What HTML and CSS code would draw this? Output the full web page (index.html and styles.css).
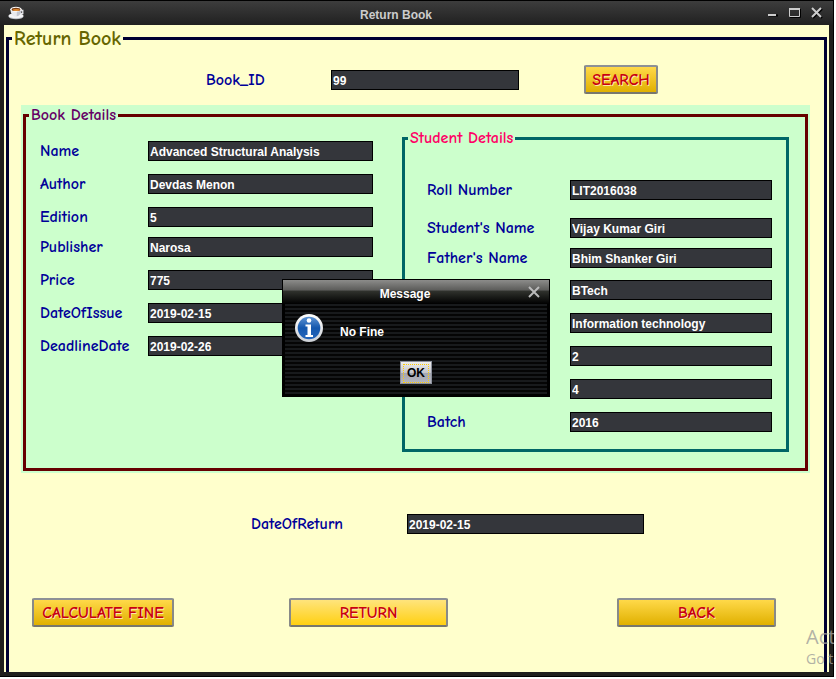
FILE: index.html
```html
<!DOCTYPE html>
<html lang="en">
<head>
<meta charset="utf-8">
<title>Return Book</title>
<link rel="stylesheet" href="styles.css">
</head>
<body>
<div class="window">
  <header class="titlebar">
    <svg class="cup" viewBox="0 0 18 14" aria-hidden="true">
      <ellipse cx="8" cy="10.500" rx="7.500" ry="2.800" fill="#b9bcc2"/>
      <ellipse cx="8" cy="9.800" rx="7.500" ry="2.500" fill="#f4f4f6"/>
      <path d="M12.500 4.500h2.300v3h-3" fill="none" stroke="#e8e8ec" stroke-width="1.300"/>
      <path d="M2.500 3c0 5 2 7.500 5.500 7.500S13.500 8 13.500 3z" fill="#e9eaee"/>
      <path d="M9 4h4.200c-.2 4-2 6-4.500 6.200z" fill="#c3c5ce"/>
      <ellipse cx="8" cy="3.200" rx="5.600" ry="2.400" fill="#fff"/>
      <ellipse cx="8" cy="3.400" rx="4.400" ry="1.700" fill="#7a3d12"/>
      <ellipse cx="8.300" cy="4" rx="3.400" ry="1" fill="#e08a30"/>
    </svg>
    <h1 class="title">Return Book</h1>
    <div class="controls">
      <button type="button" aria-label="Minimize"><svg viewBox="0 0 14 14"><path d="M3 9.500h9" stroke="#000" stroke-width="2"/><path d="M2 9h8" stroke="#ccc" stroke-width="2"/></svg></button>
      <button type="button" aria-label="Maximize"><svg viewBox="0 0 14 14"><path d="M2 11.500h10.500V3" fill="none" stroke="#000"/><path d="M1.500 2.500h10v8h-10z" fill="none" stroke="#ccc"/><path d="M1 3h11" stroke="#ccc" stroke-width="2"/></svg></button>
      <button type="button" aria-label="Close"><svg viewBox="0 0 14 14"><path d="M3 3l9 9M12 3l-9 9" stroke="#000" stroke-width="2"/><path d="M2 2l9 9M11 2l-9 9" stroke="#ccc" stroke-width="2"/></svg></button>
    </div>
  </header>

  <main class="content">
    <fieldset class="panel return-panel">
      <legend>Return Book</legend>

      <div class="search-row">
        <label for="book-id">Book_ID</label>
        <input id="book-id" type="text" value="99">
        <button type="button" class="gold">SEARCH</button>
      </div>

      <div class="details">
        <fieldset class="panel book-panel">
          <legend>Book Details</legend>
          <div class="columns">
            <div class="book-form">
              <div class="group">
                <div class="row"><label for="name">Name</label><input id="name" type="text" value="Advanced Structural Analysis"></div>
                <div class="row"><label for="author">Author</label><input id="author" type="text" value="Devdas Menon"></div>
                <div class="row"><label for="edition">Edition</label><input id="edition" type="text" value="5"></div>
              </div>
              <div class="group">
                <div class="row"><label for="publisher">Publisher</label><input id="publisher" type="text" value="Narosa"></div>
                <div class="row"><label for="price">Price</label><input id="price" type="text" value="775"></div>
                <div class="row"><label for="issue">DateOfIssue</label><input id="issue" type="text" value="2019-02-15"></div>
                <div class="row"><label for="deadline">DeadlineDate</label><input id="deadline" type="text" value="2019-02-26"></div>
              </div>
            </div>

            <fieldset class="panel student-panel">
              <legend>Student Details</legend>
              <div class="student-form">
                <div class="row"><label for="roll">Roll Number</label><input id="roll" type="text" value="LIT2016038"></div>
                <div class="group names">
                  <div class="row"><label for="student">Student's Name</label><input id="student" type="text" value="Vijay Kumar Giri"></div>
                  <div class="row"><label for="father">Father's Name</label><input id="father" type="text" value="Bhim Shanker Giri"></div>
                </div>
                <div class="group">
                  <div class="row"><input type="text" aria-label="Course" value="BTech"></div>
                  <div class="row"><input type="text" aria-label="Branch" value="Information technology"></div>
                  <div class="row"><input type="text" aria-label="Year" value="2"></div>
                  <div class="row"><input type="text" aria-label="Semester" value="4"></div>
                  <div class="row"><label for="batch">Batch</label><input id="batch" type="text" value="2016"></div>
                </div>
              </div>
            </fieldset>
          </div>
        </fieldset>
      </div>

      <div class="date-row">
        <label for="return-date">DateOfReturn</label>
        <input id="return-date" type="text" value="2019-02-15">
      </div>

      <div class="actions">
        <button type="button" class="gold medium">CALCULATE FINE</button>
        <button type="button" class="gold lit wide">RETURN</button>
        <button type="button" class="gold wide">BACK</button>
      </div>
    </fieldset>
  </main>

  <section class="message" role="dialog" aria-labelledby="message-title">
    <header class="message-bar">
      <h2 id="message-title">Message</h2>
      <button type="button" aria-label="Close message"><svg viewBox="0 0 14 14"><path d="M2 2l10 10M12 2L2 12" stroke="#bbb" stroke-width="2"/></svg></button>
    </header>
    <div class="message-body">
      <div class="notice">
        <svg class="info" viewBox="0 0 28 28" aria-hidden="true">
          <defs>
            <linearGradient id="blue" x1="0" y1="0" x2="0" y2="1"><stop offset="0" stop-color="#5d93d3"/><stop offset=".5" stop-color="#1457ad"/><stop offset="1" stop-color="#2465bb"/></linearGradient>
            <linearGradient id="rim" x1="0" y1="0" x2="0" y2="1"><stop offset="0" stop-color="#fff"/><stop offset="1" stop-color="#ccd0d5"/></linearGradient>
          </defs>
          <circle cx="14" cy="14" r="14" fill="url(#rim)"/>
          <circle cx="14" cy="14" r="11.300" fill="url(#blue)"/>
          <circle cx="14" cy="6.500" r="2.300" fill="#fff"/>
          <path d="M10.500 10.500H16V21h2v2h-7.500v-2h2v-8.500h-2z" fill="#fff"/>
        </svg>
        <p>No Fine</p>
      </div>
      <button type="button" class="ok"><span>OK</span></button>
    </div>
  </section>
</div>
<div class="watermark"><p class="big">Act</p><p>Go to</p></div>
</body>
</html>
```
FILE: styles.css
```css
* { box-sizing: border-box; }

body {
  margin: 0;
  background: #fff;
  color: #fff;
  font: bold 12px/16px "Liberation Sans", Arial, sans-serif;
}

h1, h2, p { margin: 0; font: inherit; }

button {
  margin: 0;
  padding: 0;
  border: 0;
  background: none;
  font: inherit;
}

.window {
  position: relative;
  display: flex;
  flex-direction: column;
  min-height: calc(100vh - 2px);
  margin: 0 2px 2px 0;
  border: solid #000;
  border-width: 1px 1px 1px 0;
  background: #201f1d;
}

.titlebar {
  display: flex;
  align-items: center;
  height: 24px;
  padding: 0 9px 0 8px;
  background: linear-gradient(#3d3d3d, #202020);
}

.cup { width: 18px; height: 14px; }

.title {
  flex: 1;
  padding: 3px 0 0;
  color: #ccc;
  text-align: center;
}

.controls { display: flex; gap: 8px; }
.controls svg { display: block; width: 14px; height: 14px; }

.content {
  flex: 1;
  display: flex;
  margin: 0 4px;
  margin-bottom: 4px;
  padding: 2px 2px 0;
  background: #ffc;
}

.panel {
  min-width: 0;
  margin: 0;
  padding: 0 3px;
  border: 3px solid;
}

.panel > legend { padding: 0 2px; }

legend, label, .gold {
  font: bold 16px/21px "Comic Sans MS", "Comic Neue", "Noto Sans", sans-serif;
  -webkit-text-stroke: 0;
}

label { color: #009; line-height: 20px; white-space: nowrap; }

.return-panel { flex: 1; border-color: #003; border-bottom: 0; }
.return-panel > legend { color: #660; font-size: 20px; line-height: 23px; }

.book-panel { border-color: #600; }
.book-panel > legend { color: #606; }

.student-panel { margin-top: 2px; border-color: #066; }
.student-panel > legend { color: #f06; }

input {
  width: 100%;
  min-width: 0;
  height: 20px;
  margin: 0;
  padding: 2px 1px 0;
  border: 1px solid #000;
  border-radius: 0;
  background: #34363b;
  color: #fff;
  font: inherit;
}

.gold {
  height: 29px;
  padding-top: 2px;
  border: 2px solid;
  border-color: #8d9196 #888a88 #77776d #888a88;
  border-radius: 2px;
  background: linear-gradient(#ffd949, #e0b000);
  color: #c80010;
  text-shadow: 1px 1px #ffe9a8;
  white-space: nowrap;
}

.lit { background: linear-gradient(#ffe47c, #ffd012); }

.search-row {
  display: grid;
  grid-template-columns: 194fr 125fr 188fr 65fr 74fr 163fr;
  align-items: center;
  margin-top: 15px;
}
.search-row label { grid-column: 2; }
.search-row .gold { grid-column: 5; }

.details {
  margin: 11px 11px 0 9px;
  padding: 0 2px 2px;
  background: #cfc;
}

.columns {
  display: grid;
  grid-template-columns: 333fr 387fr;
  gap: 29px;
  padding: 0 13px 16px 11px;
}

.book-form {
  display: flex;
  flex-direction: column;
  gap: 10px;
  padding-top: 15px;
}

.group { display: grid; gap: 13px; }

.row { display: grid; grid-template-columns: 108px 1fr; }
.row input { grid-column: 2; }

.student-form {
  display: grid;
  gap: 12px;
  padding: 31px 11px 17px 19px;
}
.student-form .row { grid-template-columns: 143px 1fr; }
.names { gap: 10px; padding-top: 6px; }

.date-row {
  display: grid;
  grid-template-columns: 239fr 156fr 237fr 177fr;
  margin-top: 41px;
}
.date-row label { grid-column: 2; }

.actions {
  display: grid;
  grid-template-columns: 257fr 328fr 159fr;
  justify-items: start;
  margin: 64px 45px 40px 20px;
}
.medium { width: 142px; }
.wide { width: 159px; }

.message {
  position: absolute;
  inset: 0 1px 1px 0;
  width: 268px;
  height: fit-content;
  margin: auto;
  border: 1px solid #000;
  background: #000;
}

.message-bar {
  display: flex;
  align-items: center;
  height: 24px;
  padding: 0 8px 0 0;
  background: linear-gradient(#8c8c8a, #5c5c5a 42%, #30322d 46%, #000);
}
.message-bar h2 {
  flex: 1;
  padding: 4px 0 0;
  text-align: center;
}
.message-bar svg { display: block; width: 14px; height: 14px; }

.message-body {
  display: flex;
  flex-direction: column;
  align-items: center;
  gap: 19px;
  margin: 0 2px 2px;
  padding: 10px 10px;
  background: repeating-linear-gradient(#181a1c 0 2px, #050505 2px 4px);
}

.notice {
  display: flex;
  align-self: stretch;
  align-items: center;
  gap: 17px;
}
.notice p { padding-top: 8px; }
.info { width: 28px; height: 28px; }

.ok {
  width: 32px;
  height: 23px;
  padding: 2px;
  border: 1px solid #8c909c;
  background: linear-gradient(#eee, #c5c6cc 50%, #a4a6b0 52%, #b5b7c0);
  color: #000;
}
.ok span {
  display: block;
  border: 1px dotted #fc0;
  line-height: 17px;
}

.watermark {
  position: absolute;
  right: 2px;
  bottom: 10px;
  width: 28px;
  overflow: hidden;
  color: #a0a09c;
  font: 14px/20px "Open Sans", sans-serif;
  white-space: nowrap;
  opacity: .8;
}
.big { font-size: 20px; line-height: 25px; }
```
